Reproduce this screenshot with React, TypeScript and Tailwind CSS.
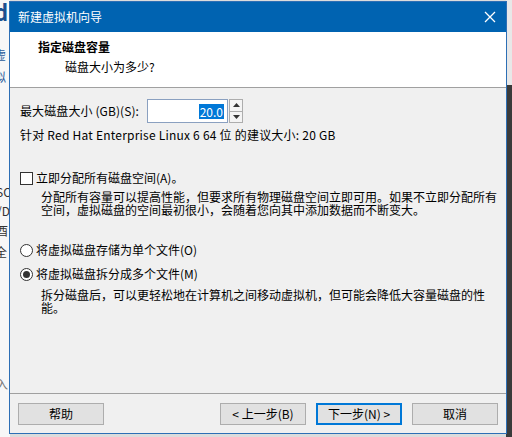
import React from "react";

const font = { fontFamily: '"Noto Sans CJK SC", "Noto Sans", sans-serif' };

function Btn({ children, primary = false }: { children: React.ReactNode; primary?: boolean }) {
  return (
    <div
      className={
        "w-[86px] h-[22px] flex items-center justify-center text-[12px] text-black bg-[#e1e1e1] " +
        (primary ? "border-2 border-[#0078d7]" : "border border-[#adadad]")
      }
    >
      {children}
    </div>
  );
}

export default function App() {
  return (
    <div className="relative w-[512px] h-[437px] overflow-hidden bg-[#dcdcdc]" style={font}>
      {/* background window fragments on the left */}
      <div className="absolute left-0 top-0 w-[10px] h-[437px] bg-[#f7f7f7] overflow-hidden text-[12px] leading-[14px] text-[#333]">
        <div className="absolute left-[-6px] top-[4px] text-[22px] font-bold text-[#1c4f8f]">d</div>
        <div className="absolute left-[-6px] top-[48px] text-[#2a5a9a]">虚</div>
        <div className="absolute left-[-6px] top-[70px] text-[#2a5a9a]">拟</div>
        <div className="absolute left-[-4px] top-[185px]">SO</div>
        <div className="absolute left-[-3px] top-[204px]">/D</div>
        <div className="absolute left-[-4px] top-[224px]">酉</div>
        <div className="absolute left-[-5px] top-[245px]">全</div>
        <div className="absolute left-[-4px] top-[377px] text-[#777]">入</div>
      </div>
      <div className="absolute right-0 top-0 w-[6px] h-[437px] bg-[#3a3a3a]">
        <div className="w-[6px] h-[85px] bg-[#e8e8e8]" />
      </div>

      {/* dialog */}
      <div className="absolute left-[9px] top-[1px] w-[498px] h-[433px] border border-[#2d6fb5] bg-[#f0f0f0] flex flex-col">
        {/* title bar */}
        <div className="h-[30px] bg-[#0063b1] flex items-center justify-between pl-[8px] pr-[8px] shrink-0">
          <span className="text-white text-[12px]">新建虚拟机向导</span>
          <svg width="12" height="12" viewBox="0 0 12 12" className="mr-[2px]">
            <path d="M1 1 L11 11 M11 1 L1 11" stroke="white" strokeWidth="1.3" />
          </svg>
        </div>
        {/* header */}
        <div className="h-[56px] bg-white border-b border-[#a0a0a0] pl-[28px] pt-[7px] shrink-0 text-[12px] text-black">
          <div className="font-bold leading-[16px]">指定磁盘容量</div>
          <div className="pl-[27px] mt-[4px] leading-[16px]">磁盘大小为多少?</div>
        </div>
        {/* body */}
        <div className="flex-1 pl-[10px] pr-[10px] pt-[11px] text-[12px] text-black flex flex-col">
          <div className="flex items-center h-[24px]">
            <span className="w-[127px] tracking-[0.1px]">最大磁盘大小 (GB)(S):</span>
            <div className="w-[81px] h-[24px] border border-[#8aa0c0] bg-white flex items-center justify-end pr-[3px]">
              <span className="bg-[#0078d7] text-white leading-[15px] px-[1px]">20.0</span>
            </div>
            <div className="w-[14px] h-[24px] flex flex-col ml-[1px]">
              <div className="flex-1 border border-[#adadad] bg-[#f4f4f4] flex items-center justify-center">
                <svg width="7" height="4" viewBox="0 0 7 4"><path d="M3.5 0 L7 4 L0 4 Z" fill="#333" /></svg>
              </div>
              <div className="flex-1 border border-t-0 border-[#adadad] bg-[#f4f4f4] flex items-center justify-center">
                <svg width="7" height="4" viewBox="0 0 7 4"><path d="M0 0 L7 0 L3.5 4 Z" fill="#333" /></svg>
              </div>
            </div>
          </div>
          <div className="mt-[4px] leading-[16px] tracking-[0.22px]">针对 Red Hat Enterprise Linux 6 64 位 的建议大小: 20 GB</div>

          <div className="mt-[27px] flex items-center leading-[16px]">
            <div className="w-[13px] h-[13px] border border-[#333] bg-white mr-[3px]" />
            <span>立即分配所有磁盘空间(A)。</span>
          </div>
          <div className="pl-[21px] mt-[4px] leading-[13px] w-[480px]">
            分配所有容量可以提高性能，但要求所有物理磁盘空间立即可用。如果不立即分配所有空间，虚拟磁盘的空间最初很小，会随着您向其中添加数据而不断变大。
          </div>

          <div className="mt-[26px] flex items-center leading-[16px]">
            <div className="w-[13px] h-[13px] rounded-full border border-[#333] bg-white mr-[3px]" />
            <span>将虚拟磁盘存储为单个文件(O)</span>
          </div>
          <div className="mt-[8px] flex items-center leading-[16px]">
            <div className="w-[13px] h-[13px] rounded-full border border-[#333] bg-white mr-[3px] flex items-center justify-center">
              <div className="w-[7px] h-[7px] rounded-full bg-[#333]" />
            </div>
            <span>将虚拟磁盘拆分成多个文件(M)</span>
          </div>
          <div className="pl-[21px] mt-[6px] leading-[13px] w-[480px]">
            拆分磁盘后，可以更轻松地在计算机之间移动虚拟机，但可能会降低大容量磁盘的性能。
          </div>
        </div>
        {/* footer */}
        <div className="h-[40px] border-t border-[#a0a0a0] shrink-0 flex items-start pt-[9px] pl-[8px] pr-[8px]">
          <Btn>帮助</Btn>
          <div className="flex-1" />
          <Btn>&lt; 上一步(B)</Btn>
          <div className="w-[10px]" />
          <Btn primary>下一步(N) &gt;</Btn>
          <div className="w-[10px]" />
          <Btn>取消</Btn>
        </div>
      </div>
    </div>
  );
}
